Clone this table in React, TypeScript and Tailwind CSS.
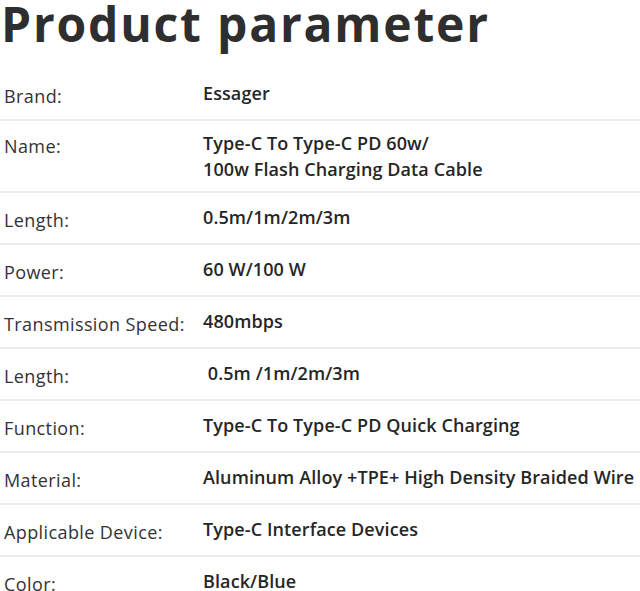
import React from "react";

const rows: { label: string; value: React.ReactNode; pad?: string }[] = [
  { label: "Brand:", value: "Essager" },
  {
    label: "Name:",
    value: (
      <>
        Type-C To Type-C PD 60w/
        <br />
        100w Flash Charging Data Cable
      </>
    ),
    pad: "pt-[9px] pb-[9px]",
  },
  { label: "Length:", value: "0.5m/1m/2m/3m" },
  { label: "Power:", value: "60 W/100 W" },
  { label: "Transmission Speed:", value: "480mbps" },
  { label: "Length:", value: "\u00a00.5m /1m/2m/3m" },
  { label: "Function:", value: "Type-C To Type-C PD Quick Charging" },
  { label: "Material:", value: "Aluminum Alloy +TPE+ High Density Braided Wire" },
  { label: "Applicable Device:", value: "Type-C Interface Devices" },
  { label: "Color:", value: "Black/Blue" },
];

const App = () => {
  return (
    <div className="w-[640px] h-[591px] overflow-hidden bg-white font-['Open_Sans',sans-serif] text-[#2b2b2b]">
      <h1 className="h-[69px] pl-[1px] text-[48px] leading-[48px] font-bold tracking-[1.8px] text-[#2e2e2e]">
        Product parameter
      </h1>
      <div className="flex flex-col">
        {rows.map((r, i) => (
          <div
            key={i}
            className={`flex items-start border-b-2 border-[#ececec] last:border-b-0 ${r.pad ?? "pt-[11px] pb-[13px]"}`}
          >
            <div className="w-[203px] shrink-0 pl-[4px] pt-[6px] text-[18px] leading-[20px] tracking-[0.4px] text-[#333]">
              {r.label}
            </div>
            <div className="flex-1 whitespace-nowrap text-[18px] leading-[26px] font-semibold tracking-[0.1px] text-[#262626]">
              {r.value}
            </div>
          </div>
        ))}
      </div>
    </div>
  );
};

export default App;
